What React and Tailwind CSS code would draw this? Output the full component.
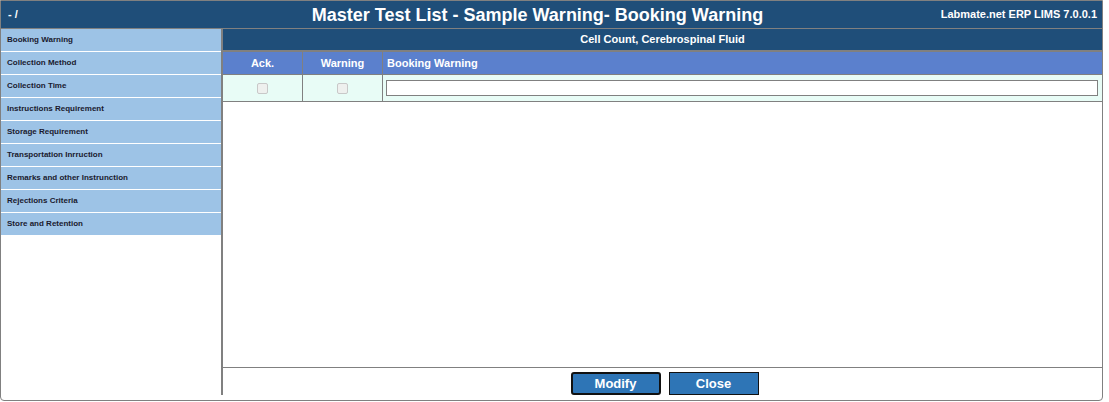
import React from 'react';

const menuItems = [
    'Booking Warning',
    'Collection Method',
    'Collection Time',
    'Instructions Requirement',
    'Storage Requirement',
    'Transportation Inrruction',
    'Remarks and other Instrunction',
    'Rejections Criteria',
    'Store and Retention',
];

const App = () => {
    return (
        <div className="w-[1103px] h-[401px] border border-[#808080] rounded-b-[4px] flex flex-col overflow-hidden bg-white font-['Liberation_Sans',Arial,sans-serif]">
            {/* title bar */}
            <div className="h-[28px] shrink-0 bg-[#1f4e79] border-b border-[#808080] flex items-center pl-[7px] pr-[5px] text-white">
                <div className="w-[260px] text-[11px] font-bold">- /</div>
                <div className="flex-1 text-center text-[18px] font-bold leading-none -ml-[80px]">
                    Master Test List - Sample Warning- Booking Warning
                </div>
                <div className="w-[210px] text-right text-[11px] font-bold">Labmate.net ERP LIMS 7.0.0.1</div>
            </div>

            <div className="flex flex-1 pb-[5px]">
                {/* side menu */}
                <div className="w-[222px] shrink-0 border-r-2 border-[#808080] flex flex-col">
                    {menuItems.map((item) => (
                        <div
                            key={item}
                            className="h-[23px] bg-[#9dc3e6] border-b border-white flex items-center px-[6px] text-[8px] font-bold text-[#1a1a2e]"
                        >
                            {item}
                        </div>
                    ))}
                </div>

                {/* content */}
                <div className="flex-1 flex flex-col">
                    <div className="h-[23px] bg-[#1f4e79] border-b-2 border-[#808080] flex items-center justify-center text-white text-[11px] font-bold">
                        Cell Count, Cerebrospinal Fluid
                    </div>
                    <div className="flex h-[23px] bg-[#5b80cd] border-b border-[#808080] text-white text-[11px] font-bold">
                        <div className="w-[80px] border-r border-[#808080] flex items-center justify-center">Ack.</div>
                        <div className="w-[80px] border-r border-[#808080] flex items-center justify-center">Warning</div>
                        <div className="flex-1 flex items-center px-[4px]">Booking Warning</div>
                    </div>
                    <div className="flex h-[27px] bg-[#e8fcf6] border-b border-[#808080]">
                        <div className="w-[80px] border-r border-[#808080] flex items-center justify-center">
                            <div className="w-[11px] h-[11px] rounded-[2px] border border-[#c8c8c8] bg-[#eef0ee]" />
                        </div>
                        <div className="w-[80px] border-r border-[#808080] flex items-center justify-center">
                            <div className="w-[11px] h-[11px] rounded-[2px] border border-[#c8c8c8] bg-[#eef0ee]" />
                        </div>
                        <div className="flex-1 flex items-center pl-[3px] pr-[4px]">
                            <input type="text" className="w-full h-[16px] border border-[#808080] bg-white outline-none" />
                        </div>
                    </div>
                    <div className="flex-1" />
                    <div className="h-[28px] border-t border-[#808080] flex items-start justify-center gap-[8px] pt-[4px] pl-[4px]">
                        <button className="w-[90px] h-[23px] bg-[#2e75b6] border-2 border-[#111] rounded-[3px] text-white text-[13px] font-bold">
                            Modify
                        </button>
                        <button className="w-[90px] h-[23px] bg-[#2e75b6] border border-[#111] text-white text-[13px] font-bold">
                            Close
                        </button>
                    </div>
                </div>
            </div>
        </div>
    );
};

export default App;
